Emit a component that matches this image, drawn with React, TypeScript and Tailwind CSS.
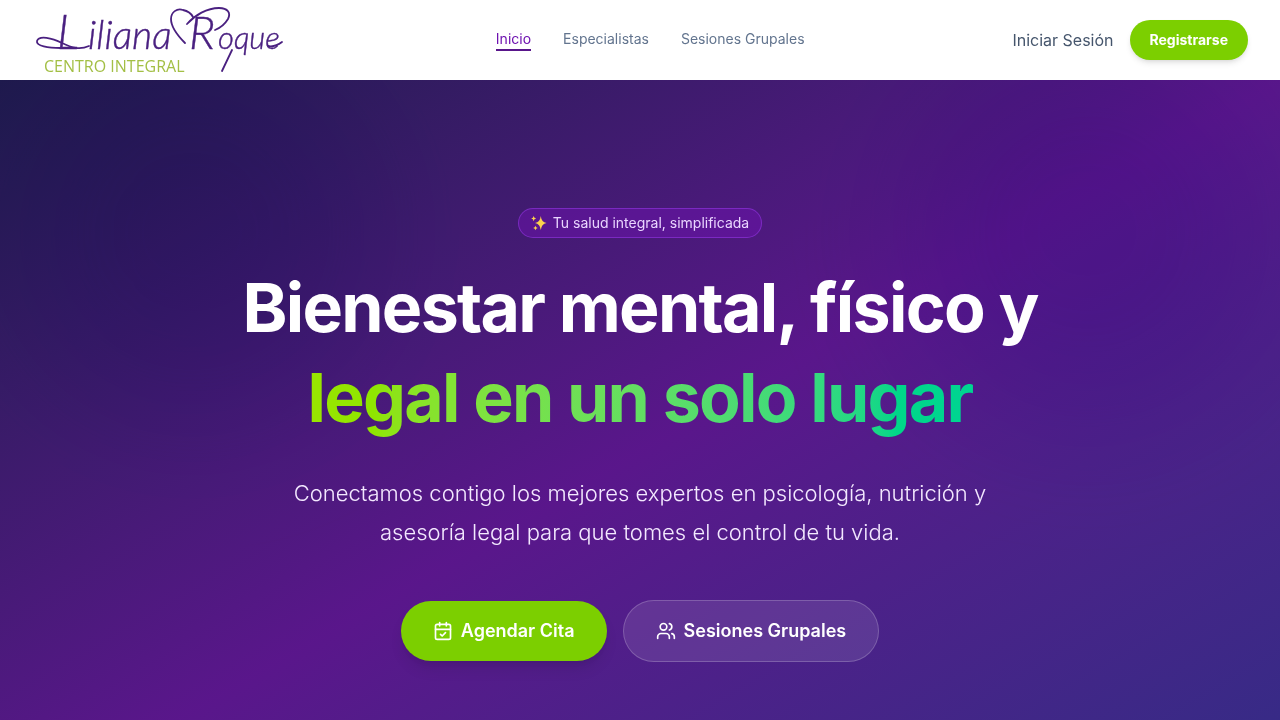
import { CalendarCheck, Users } from "lucide-react";

function Logo() {
  return (
    <a href="#inicio" aria-label="Liliana Roque Centro Integral" className="w-64 shrink-0">
      <svg viewBox="0 0 256 80" className="block h-20 w-full">
        <g fill="#4a2080" stroke="#4a2080" strokeWidth="0.4" fontFamily="Lato, sans-serif" fontStyle="italic" fontWeight="300">
          <text x="25" y="49" fontSize="47">L</text>
          <text x="56" y="49" fontSize="39">iliana</text>
          <text x="157" y="49" fontSize="46">R</text>
          <text x="186" y="49" fontSize="31">oque</text>
        </g>
        <g fill="none" stroke="#4a2080" strokeWidth="1.8" strokeLinecap="round" strokeLinejoin="round">
          <path d="M153 43C144 34 139 27 139 19c0-7 6-11 12-9 5 1 8 3 10 7" />
          <path d="M155 24C163 15 175 8 187 8c9 0 12 5 9 11-3 5-8 9-13 11" />
          <path d="M29 48C16 48 4 46 5 41c2-6 15-3 25 2s18 7 27 3" />
          <path d="M200 50l-10 21M236 46c5 1 10-1 14-4" />
        </g>
        <text x="12" y="72" fill="#a3bf45" fontFamily="'Open Sans', sans-serif" fontSize="16">
          CENTRO INTEGRAL
        </text>
      </svg>
    </a>
  );
}

function Sparkles() {
  return (
    <svg viewBox="0 0 18 18" aria-hidden="true" className="size-4 shrink-0" fill="#fcd34d">
      <path d="M11 1q.7 7 6.500 8q-5.800 1-6.500 8q-.7-7-6.500-8q5.800-1 6.500-8Z" />
      <path d="M3 1q.4 2.600 2.800 3q-2.400.4-2.800 3q-.4-2.600-2.800-3q2.400-.4 2.800-3Z" />
      <path d="M5 12q.4 2.200 2.500 2.600q-2.100.4-2.500 2.600q-.4-2.200-2.500-2.600q2.100-.4 2.500-2.600Z" />
    </svg>
  );
}

export default function App() {
  return (
    <div className="min-h-screen bg-white font-['Inter',sans-serif]">
      <header className="bg-white">
        <div className="mx-auto flex h-20 max-w-7xl items-center justify-between px-8">
          <Logo />
          <nav className="flex gap-8 text-sm text-slate-500">
            <a href="#inicio" className="border-b-2 border-purple-900 text-purple-800">Inicio</a>
            <a href="#especialistas" className="border-b-2 border-transparent">Especialistas</a>
            <a href="#sesiones" className="border-b-2 border-transparent">Sesiones Grupales</a>
          </nav>
          <div className="flex items-center gap-4">
            <a href="#entrar" className="text-slate-600">Iniciar Sesión</a>
            <button type="button" className="h-10 rounded-full bg-lime-500 px-5 text-sm font-bold text-white shadow-md">
              Registrarse
            </button>
          </div>
        </div>
      </header>
      <main className="relative overflow-hidden bg-linear-to-br from-indigo-950 via-purple-900 to-indigo-900 px-8 pt-32 pb-40">
        <div className="absolute -top-10 left-0 size-96 rounded-full bg-violet-700/20 mix-blend-multiply blur-3xl" />
        <div className="absolute -top-10 right-0 size-96 rounded-full bg-violet-700/20 mix-blend-multiply blur-3xl" />
        <div className="relative mx-auto flex max-w-4xl flex-col items-center text-center">
          <p className="mb-6 flex items-center gap-1.5 rounded-full border border-purple-500/40 bg-purple-800/50 px-3 py-1 text-sm text-purple-200">
            <Sparkles />
            Tu salud integral, simplificada
          </p>
          <h1 className="mb-8 text-[68px] leading-[90px] font-bold tracking-tight text-white">
            Bienestar mental, físico y{" "}
            <span className="bg-linear-to-r from-lime-400 to-emerald-400 bg-clip-text text-transparent">
              legal en un solo lugar
            </span>
          </h1>
          <p className="mb-12 max-w-3xl text-[22px] leading-[39px] font-light text-purple-100">
            Conectamos contigo los mejores expertos en psicología, nutrición y<br /> asesoría legal para que tomes el control de tu vida.
          </p>
          <div className="flex items-center gap-4">
            <button type="button" className="flex h-15 items-center gap-2 rounded-full bg-lime-500 px-8 text-lg font-semibold text-white shadow-lg">
              <CalendarCheck className="size-5" />
              Agendar Cita
            </button>
            <button type="button" className="flex h-15.5 items-center gap-2 rounded-full border border-white/20 bg-white/10 px-8 text-lg font-semibold text-white">
              <Users className="size-5" />
              Sesiones Grupales
            </button>
          </div>
        </div>
      </main>
    </div>
  );
}
